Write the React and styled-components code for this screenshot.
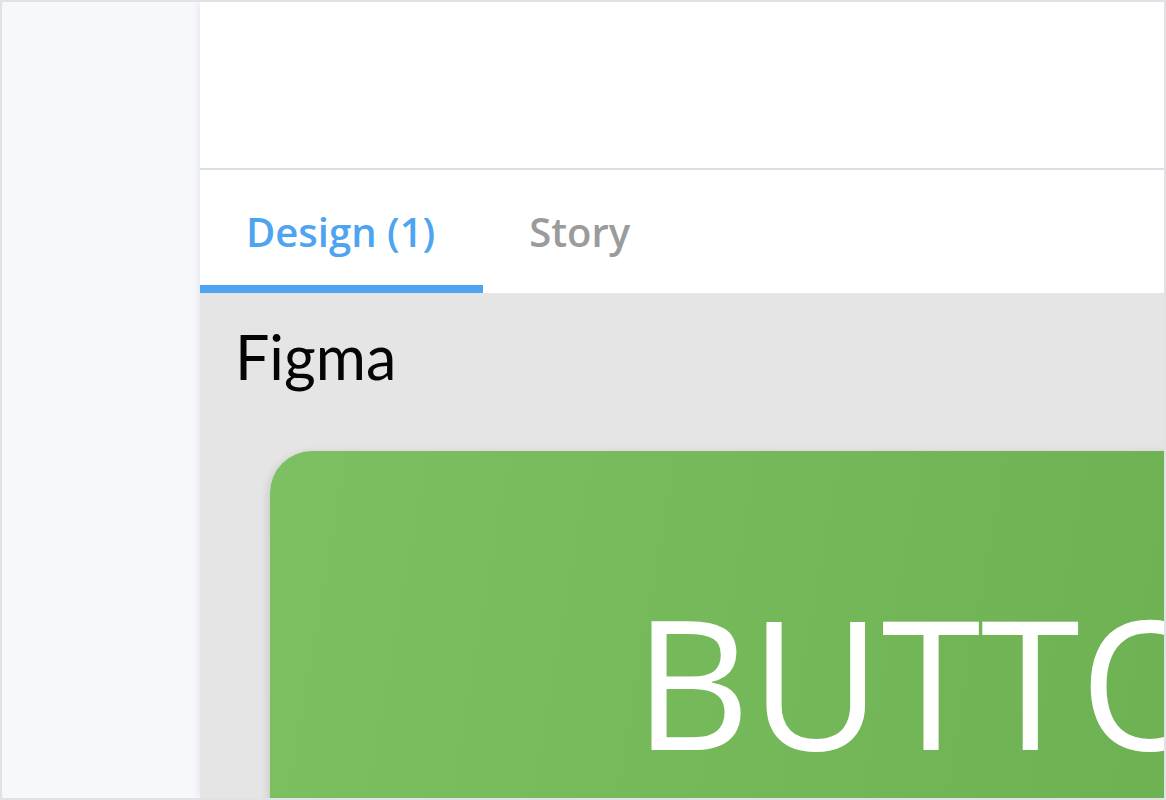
import React, { useState } from "react";
import styled, { createGlobalStyle } from "styled-components";

const GlobalStyle = createGlobalStyle`
  html, body {
    margin: 0;
    padding: 0;
    background: #ffffff;
  }
  * {
    box-sizing: border-box;
  }
`;

const tabs = [
  { id: "design", label: "Design (1)" },
  { id: "story", label: "Story" },
];

const App = () => {
  const [activeTab, setActiveTab] = useState("design");
  return (
    <>
      <GlobalStyle />
      <Frame>
        <Sidebar />
        <Main>
          <Header />
          <TabBar>
            {tabs.map((tab) => (
              <Tab
                key={tab.id}
                $active={activeTab === tab.id}
                onClick={() => setActiveTab(tab.id)}
              >
                {tab.label}
              </Tab>
            ))}
          </TabBar>
          <Content>
            <SourceTitle>Figma</SourceTitle>
            <PreviewCard>BUTTON</PreviewCard>
          </Content>
        </Main>
      </Frame>
    </>
  );
};

const Frame = styled.div`
  width: 1166px;
  height: 800px;
  border: 2px solid #e1e2e5;
  display: grid;
  grid-template-columns: 198px 1fr;
  overflow: hidden;
  background: #ffffff;
`;

const Sidebar = styled.aside`
  background: #f6f8fc;
`;

const Main = styled.main`
  display: flex;
  flex-direction: column;
  min-width: 0;
  overflow: hidden;
  background: #ffffff;
  box-shadow: -2px 0 6px rgba(30, 40, 60, 0.07);
  position: relative;
`;

const Header = styled.header`
  height: 168px;
  flex-shrink: 0;
  border-bottom: 2px solid #dcdde0;
  background: #ffffff;
`;

const TabBar = styled.nav`
  height: 123px;
  flex-shrink: 0;
  display: flex;
  align-items: stretch;
  background: #ffffff;
`;

const Tab = styled.div`
  padding: 38px 48px 0 46px;
  font-family: "Open Sans", "Noto Sans", sans-serif;
  font-weight: 600;
  font-size: 40px;
  line-height: 48px;
  color: ${(p) => (p.$active ? "#4fa4f2" : "#9b9b9b")};
  border-bottom: 8px solid ${(p) => (p.$active ? "#4fa4f2" : "transparent")};
  cursor: pointer;
`;

const Content = styled.section`
  flex: 1;
  background: #e5e5e5;
  padding: 28px 0 0 35px;
  overflow: hidden;
`;

const SourceTitle = styled.h2`
  margin: 0;
  font-family: "Lato", "Noto Sans", sans-serif;
  font-weight: 400;
  font-size: 61px;
  line-height: 72px;
  color: #050505;
`;

const PreviewCard = styled.div`
  margin: 58px 0 0 35px;
  width: 1100px;
  height: 500px;
  border-radius: 42px;
  background: linear-gradient(100deg, #7cc061 0%, #6aae4f 100%);
  box-shadow: -2px 2px 8px rgba(0, 0, 0, 0.12);
  padding: 130px 0 0 364px;
  font-family: "Open Sans", "Noto Sans", sans-serif;
  font-weight: 400;
  font-size: 180px;
  line-height: 200px;
  color: #ffffff;
  white-space: nowrap;
`;

export default App;
